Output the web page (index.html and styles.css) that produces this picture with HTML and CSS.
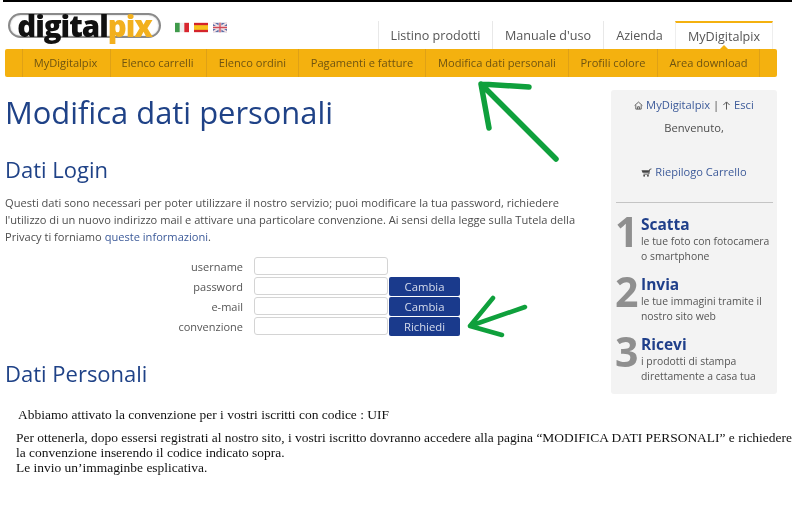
FILE: index.html
```html
<!DOCTYPE html>
<html lang="it">
<head>
<meta charset="utf-8">
<title>Modifica dati personali</title>
<link rel="stylesheet" href="styles.css">
</head>
<body>
<div class="page">
  <div class="topbar"></div>
  <header class="header">
    <div class="brand">
      <div class="logo"><span class="logo-dark">digital</span><span class="logo-gold">pix</span></div>
      <div class="flags">
        <svg class="flag" viewBox="0 0 15 10"><rect width="15" height="10" fill="#eee"/><rect width="5" height="10" fill="#3f9a4b"/><rect x="10" width="5" height="10" fill="#d8262e"/></svg>
        <svg class="flag" viewBox="0 0 15 10"><rect width="15" height="10" fill="#d4242a"/><rect y="2.5" width="15" height="5" fill="#f6c21c"/></svg>
        <svg class="flag" viewBox="0 0 15 10"><rect width="15" height="10" fill="#5a6ea8"/><path d="M0 0L15 10M15 0L0 10" stroke="#f2dfe2" stroke-width="2"/><path d="M7.5 0V10M0 5H15" stroke="#f2e6e8" stroke-width="3"/><path d="M7.5 0V10M0 5H15" stroke="#cf4a58" stroke-width="1.4"/></svg>
      </div>
    </div>
    <nav class="tabs">
      <a class="tab tab-a">Listino prodotti</a>
      <a class="tab tab-b">Manuale d'uso</a>
      <a class="tab tab-c">Azienda</a>
      <a class="tab tab-active">MyDigitalpix</a>
    </nav>
  </header>
  <nav class="menu">
    <a class="menu-item m1">MyDigitalpix</a>
    <a class="menu-item m2">Elenco carrelli</a>
    <a class="menu-item m3">Elenco ordini</a>
    <a class="menu-item m4">Pagamenti e fatture</a>
    <a class="menu-item m5">Modifica dati personali</a>
    <a class="menu-item m6">Profili colore</a>
    <a class="menu-item m7">Area download</a>
  </nav>
  <div class="columns">
    <main class="content">
      <h1 class="title">Modifica dati personali</h1>
      <h2 class="section section-login">Dati Login</h2>
      <p class="intro">Questi dati sono necessari per poter utilizzare il nostro servizio; puoi modificare la tua password, richiedere<br>l'utilizzo di un nuovo indirizzo mail e attivare una particolare convenzione. Ai sensi della legge sulla Tutela della<br>Privacy ti forniamo <a class="link">queste informazioni</a>.</p>
      <div class="form">
        <label class="label">username</label><div class="input"></div><div></div>
        <label class="label">password</label><div class="input"></div><button class="btn">Cambia</button>
        <label class="label">e-mail</label><div class="input"></div><button class="btn">Cambia</button>
        <label class="label">convenzione</label><div class="input"></div><button class="btn">Richiedi</button>
      </div>
      <h2 class="section section-personal">Dati Personali</h2>
    </main>
    <aside class="sidebar">
      <div class="side-links">
        <svg class="ico" viewBox="0 0 10 10"><path d="M.7 5L5 1.2 9.3 5M2 4.6V9H8V4.6M4 9V6.4H6V9" fill="none" stroke="#444" stroke-width=".9"/></svg>
        <a class="link">MyDigitalpix</a> | <svg class="ico" viewBox="0 0 10 10"><path d="M5 9.5V1.5M1.5 4.5L5 1 8.5 4.5" fill="none" stroke="#444" stroke-width="1"/></svg>
        <a class="link">Esci</a>
      </div>
      <div class="welcome">Benvenuto,</div>
      <div class="cart">
        <svg class="ico ico-cart" viewBox="0 0 12 10"><path d="M11.5 1L9.5 1.6 8.6 6.8H2.6" fill="none" stroke="#444" stroke-width="1"/><path d="M.5 2.4H9L8.5 5.4H1.6Z" fill="#444"/><circle cx="3.4" cy="8.6" r="1" fill="#444"/><circle cx="7.6" cy="8.6" r="1" fill="#444"/></svg>
        <a class="link">Riepilogo Carrello</a>
      </div>
      <hr class="rule">
      <section class="step">
        <div class="num">1</div>
        <div class="step-body"><h3 class="step-title">Scatta</h3><p class="step-text">le tue foto con fotocamera<br>o smartphone</p></div>
      </section>
      <section class="step">
        <div class="num">2</div>
        <div class="step-body"><h3 class="step-title">Invia</h3><p class="step-text">le tue immagini tramite il<br>nostro sito web</p></div>
      </section>
      <section class="step">
        <div class="num">3</div>
        <div class="step-body"><h3 class="step-title">Ricevi</h3><p class="step-text">i prodotti di stampa<br>direttamente a casa tua</p></div>
      </section>
    </aside>
  </div>
  <div class="note">
    <p class="note-lead">Abbiamo attivato la convenzione per i vostri iscritti con codice : UIF</p>
    <p class="note-body">Per ottenerla, dopo essersi registrati al nostro sito, i vostri iscritto dovranno accedere alla pagina “MODIFICA DATI PERSONALI” e richiedere<br>la convenzione inserendo il codice indicato sopra.<br>Le invio un’immaginbe esplicativa.</p>
  </div>
  <svg class="arrow arrow-top" viewBox="0 0 90 90"><path d="M6 4L14 48M6 4L54 7M7 5L81 79" fill="none" stroke="#0fa03c" stroke-width="5.5" stroke-linecap="round"/></svg>
  <svg class="arrow arrow-form" viewBox="0 0 64 45"><path d="M4 31L59 12M4 31L36 40M4 31L27 3" fill="none" stroke="#0fa03c" stroke-width="4.5" stroke-linecap="round"/></svg>
</div>
</body>
</html>
```

FILE: styles.css
```css
* { box-sizing: border-box; }
html, body { margin: 0; padding: 0; background: #fff; }
body { font-family: "Open Sans", "Liberation Sans", sans-serif; color: #4d4d4d; }
.page { position: relative; width: 796px; height: 511px; overflow: hidden; filter: blur(.35px); }
.topbar { height: 2px; margin: 0 4px 0 3px; background: #000; }

.header { display: flex; justify-content: space-between; align-items: flex-end; height: 47px; padding: 0 23px 0 8px; }
.brand { display: flex; align-items: flex-start; align-self: flex-start; margin-top: 11px; }
.logo { display: flex; align-items: center; justify-content: center; width: 153px; height: 25px; border: 2px solid #8a8a8a; border-radius: 13px; font-size: 29.5px; font-weight: 800; line-height: 25px; letter-spacing: -1px; box-shadow: inset 0 0 2px #bbb; }
.logo-dark { color: #111; }
.logo-gold { color: #f2b01e; }
.flags { display: flex; gap: 5px; margin: 9px 0 0 14px; }
.flag { display: block; width: 14px; height: 11px; }

.tabs { display: flex; height: 28px; font-size: 12.6px; line-height: 27px; }
.tab { display: block; padding-top: 1px; border-left: 1px solid #e8e8e8; color: #555; text-align: center; }
.tab-a { width: 114px; }
.tab-b { width: 111px; }
.tab-c { width: 72px; }
.tab-active { width: 98px; border-top: 2px solid #f4b10f; border-left: 1px solid #eee; border-right: 1px solid #eee; padding-top: 0; position: relative; }
.tab-active::after { content: ""; position: absolute; left: 44px; bottom: 0; border: 4px solid transparent; border-top: 0; border-bottom-color: #f4b10f; }

.menu { display: flex; height: 28px; margin: 0 19px 0 5px; padding-left: 17px; background: #f4b10f; border-radius: 2px; font-size: 11.1px; line-height: 28px; }
.menu-item { display: block; color: #6f5411; text-align: center; border-left: 1px solid #dfa116; }
.m1 { width: 88px; padding-right: 2px; }
.m2 { width: 96px; padding-right: 2px; }
.m3 { width: 92px; }
.m4 { width: 127px; }
.m5 { width: 143px; }
.m6 { width: 89px; }
.m7 { width: 103px; border-right: 1px solid #dfa116; }

.columns { display: flex; height: 317px; padding-left: 5px; }
.content { width: 606px; }
.title { margin: 15px 0 0; font-size: 30.9px; font-weight: 400; line-height: 40px; color: #1f4287; }
.section { margin: 0; font-size: 22px; font-weight: 400; line-height: 30px; color: #1f4287; }
.section-login { margin-top: 22px; }
.section-personal { margin-top: 22px; }
.intro { margin: 10px 0 0; font-size: 11.1px; line-height: 17px; color: #4d4d4d; white-space: nowrap; }
.link { color: #3c5a99; }
.form { display: grid; grid-template-columns: 238px 146px 71px; grid-auto-rows: 20px; margin-top: 11px; align-items: center; font-size: 11px; }
.label { text-align: right; color: #555; }
.input { height: 18px; margin-left: 11px; width: 134px; background: #fff; border: 1px solid #d4d4d4; border-radius: 3px; }
.btn { height: 19px; margin: 0; padding: 0; border: 0; border-radius: 2px; background: #1a3a8c; color: #d6dcec; font: 11.3px/19px "Open Sans", sans-serif; }

.sidebar { width: 166px; height: 304px; margin-top: 13px; padding-top: 6px; background: #f3f3f3; border-radius: 3px; font-size: 11.2px; text-align: center; }
.side-links { height: 17px; line-height: 17px; }
.ico { display: inline-block; width: 9px; height: 9px; vertical-align: -1px; }
.ico-cart { width: 11px; }
.welcome { margin-top: 6px; line-height: 17px; }
.cart { margin-top: 27px; line-height: 17px; font-size: 11.1px; }
.rule { margin: 22px 4px 0 5px; height: 1px; border: 0; background: #c4c4c4; }
.step { display: flex; height: 60px; padding-left: 4px; text-align: left; }
.step:first-of-type { margin-top: 11px; }
.num { width: 26px; flex: none; font-size: 41px; line-height: 41px; font-weight: 700; color: #8f8f8f; margin-top: -3px; }
.step-title { margin: 0; font-size: 15.5px; font-weight: 700; line-height: 20px; color: #1f3f8a; }
.step-text { margin: 0; font-size: 10.4px; line-height: 14.5px; color: #555; white-space: nowrap; }

.note { padding-top: 13px; font-family: "Liberation Serif", serif; font-size: 13.46px; color: #111; }
.note-lead { margin: 0; padding-left: 18px; line-height: 15px; }
.note-body { margin: 8px 0 0; padding-left: 16px; line-height: 15px; white-space: nowrap; }

.arrow { position: absolute; display: block; }
.arrow-top { left: 475px; top: 80px; width: 90px; height: 90px; }
.arrow-form { left: 466px; top: 295px; width: 64px; height: 45px; }
```
